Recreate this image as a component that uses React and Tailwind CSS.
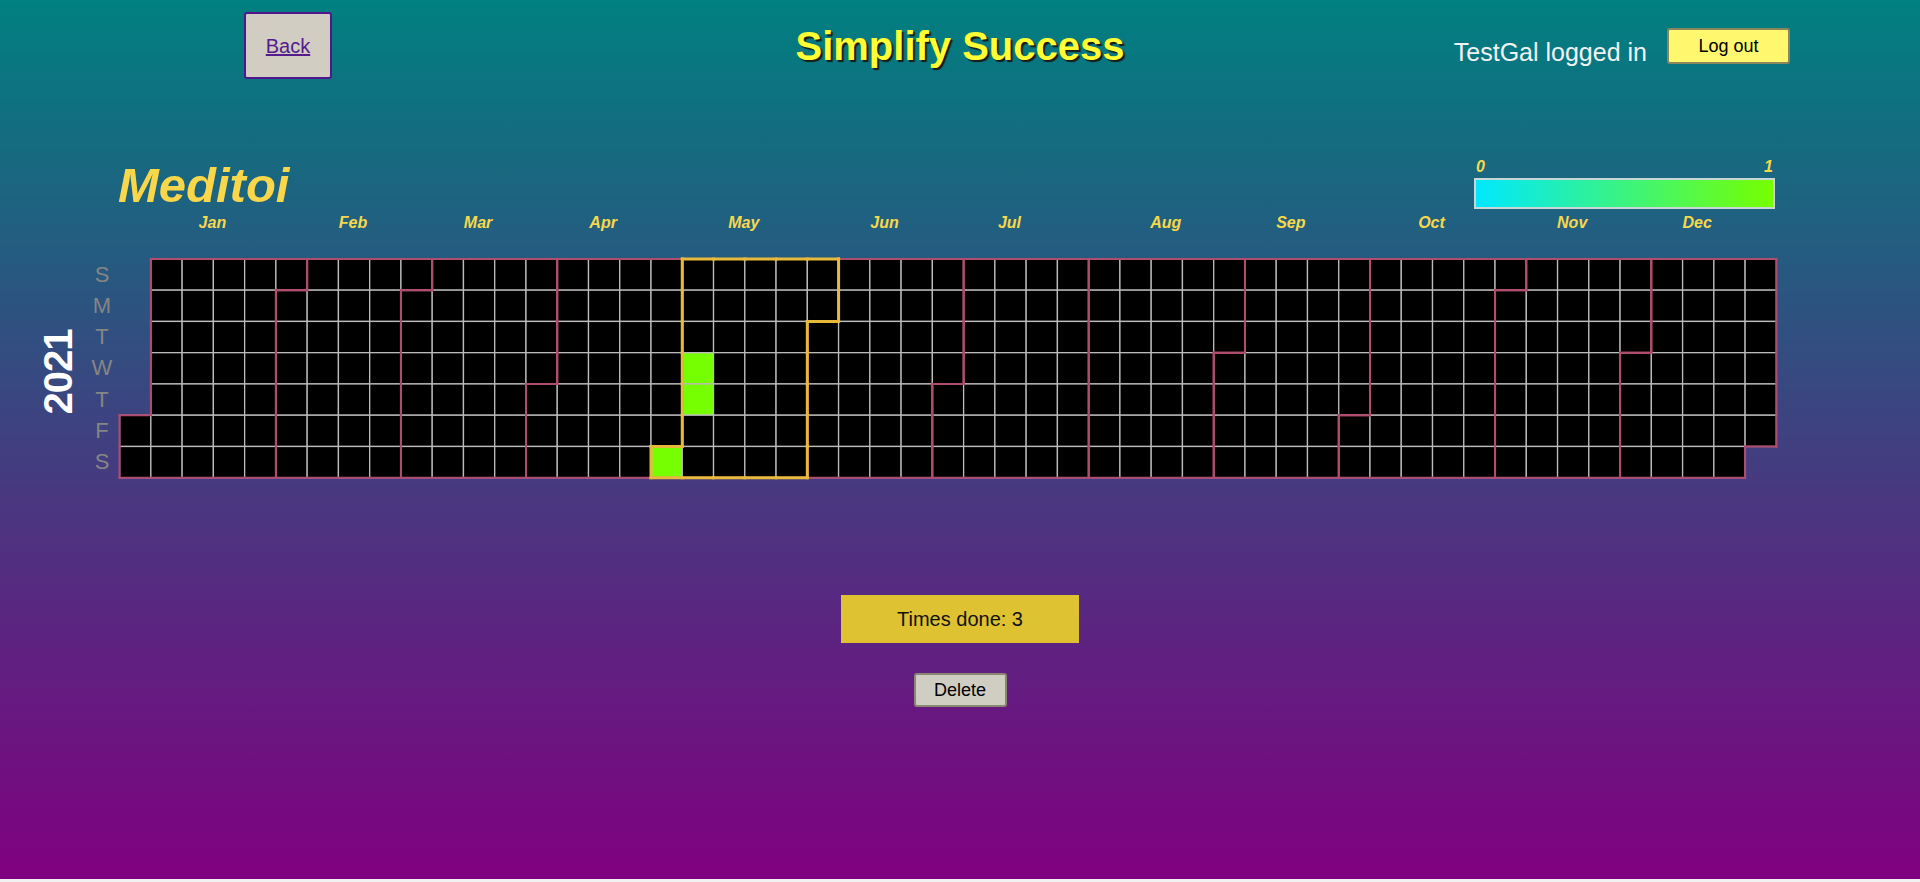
import React from "react";

const P = 31.26;
const X0 = 1.6;
const Y0 = 49.9;
const MONTHS = ["Jan", "Feb", "Mar", "Apr", "May", "Jun", "Jul", "Aug", "Sep", "Oct", "Nov", "Dec"];
const DONE = [120, 124, 125]; // May 1, May 5, May 6
const SELECTED = 4; // May

const days = Array.from({ length: 365 }, (_, d) => {
  const date = new Date(2021, 0, 1 + d);
  const pos = d + 5;
  return { d, month: date.getMonth(), col: Math.floor(pos / 7), row: pos % 7 };
});

const monthAt = (c, r) => {
  if (r < 0 || r > 6) return -1;
  const d = c * 7 + r - 5;
  if (d < 0 || d > 364) return -1;
  return days[d].month;
};

const edges = (filter) => {
  const segs = [];
  days.forEach(({ month, col, row }) => {
    if (!filter(month)) return;
    const x = X0 + col * P;
    const y = Y0 + row * P;
    if (monthAt(col, row - 1) !== month) segs.push([x, y, x + P, y]);
    if (monthAt(col, row + 1) !== month) segs.push([x, y + P, x + P, y + P]);
    if (monthAt(col - 1, row) !== month) segs.push([x, y, x, y + P]);
    if (monthAt(col + 1, row) !== month) segs.push([x + P, y, x + P, y + P]);
  });
  return segs;
};

const monthBorders = edges(() => true);
const selectedBorders = edges((m) => m === SELECTED);

const monthLabels = MONTHS.map((name, m) => {
  const list = days.filter((x) => x.month === m);
  const first = list[0].col;
  const last = list[list.length - 1].col;
  return { name, cx: X0 + ((first + last + 1) / 2) * P - 1 };
});

const Heatmap = () => (
  <svg width="1662" height="272" className="block shrink-0">
    {monthLabels.map((l) => (
      <text
        key={l.name}
        x={l.cx}
        y="19"
        textAnchor="middle"
        fill="#f7d84a"
        fontSize="16"
        fontWeight="bold"
        fontStyle="italic"
        fontFamily="'Liberation Sans', Arial, sans-serif"
      >
        {l.name}
      </text>
    ))}
    {days.map(({ d, col, row }) => (
      <rect
        key={d}
        x={X0 + col * P}
        y={Y0 + row * P}
        width={P}
        height={P}
        fill={DONE.includes(d) ? "#76ff00" : "#000"}
        stroke="#bcbcbc"
        strokeWidth="1.3"
      />
    ))}
    {monthBorders.map(([x1, y1, x2, y2], i) => (
      <line key={"m" + i} x1={x1} y1={y1} x2={x2} y2={y2} stroke="#b04c6f" strokeWidth="2" strokeLinecap="square" />
    ))}
    {selectedBorders.map(([x1, y1, x2, y2], i) => (
      <line key={"s" + i} x1={x1} y1={y1} x2={x2} y2={y2} stroke="#e9b93c" strokeWidth="3" strokeLinecap="square" />
    ))}
  </svg>
);

const DAYS = ["S", "M", "T", "W", "T", "F", "S"];

export default function App() {
  return (
    <div className="min-h-screen bg-[#f1f1f1] font-['Liberation_Sans',Arial,sans-serif]">
      <div className="h-[879px] w-full bg-[linear-gradient(to_bottom,#008080,#800080)] overflow-hidden">
        {/* Header */}
        <header className="grid grid-cols-[1fr_auto_1fr] h-[92px]">
          <div className="pl-[244px]">
            <button className="mt-[12px] w-[88px] h-[67px] bg-[#d1cdc2] border-2 border-[#52168c] rounded-[3px] flex items-center justify-center">
              <a href="#" className="text-[20px] text-[#551a8b] underline">
                Back
              </a>
            </button>
          </div>
          <h1 className="mt-[26px] text-[40px] leading-none font-bold text-[#ffff33] [text-shadow:2px_2px_1px_#1a1a1a]">
            Simplify Success
          </h1>
          <div className="flex justify-end items-start pr-[130px]">
            <span className="mt-[40px] text-[25px] leading-none text-[#f2f2f2]">TestGal logged in</span>
            <button className="ml-[20px] mt-[28px] w-[123px] h-[36px] bg-[#fff76e] border-2 border-[#8c865c] rounded-[3px] text-[18px] text-black">
              Log out
            </button>
          </div>
        </header>

        {/* Title + legend */}
        <div className="mt-[67px] ml-[118px] w-[1657px] flex justify-between items-end">
          <h2 className="text-[49px] leading-none font-bold italic text-[#fad64a] -mb-[1px]">Meditoi</h2>
          <div className="w-[301px] flex flex-col">
            <div className="flex justify-between px-[2px] text-[16px] leading-4 font-bold italic text-[#f7d84a]">
              <span>0</span>
              <span>1</span>
            </div>
            <div className="mt-[3px] h-[31px] border-2 border-[#c9d6d6] bg-[linear-gradient(to_right,#00e8ff,#76ff00)]" />
          </div>
        </div>

        {/* Calendar */}
        <div className="flex ml-[40px]">
          <div className="w-[36px] pt-[54px] h-[272px] flex items-center justify-center">
            <span className="-rotate-90 text-[40px] leading-none font-bold text-white tracking-[-1px] whitespace-nowrap">
              2021
            </span>
          </div>
          <div className="ml-[10px] w-[32px] pt-[49.9px] flex flex-col">
            {DAYS.map((d, i) => (
              <div key={i} className="h-[31.26px] flex items-center justify-center text-[22px] leading-none text-[#858585]">
                {d}
              </div>
            ))}
          </div>
          <Heatmap />
        </div>

        {/* Stats */}
        <div className="flex flex-col items-center">
          <div className="mt-[114px] w-[238px] h-[48px] bg-[#dfc232] flex items-center justify-center text-[20px] text-[#111]">
            Times done: 3
          </div>
          <button className="mt-[30px] w-[93px] h-[34px] bg-[#d0cec3] border-2 border-[#8a8870] rounded-[3px] text-[18px] text-black">
            Delete
          </button>
        </div>
      </div>
    </div>
  );
}
